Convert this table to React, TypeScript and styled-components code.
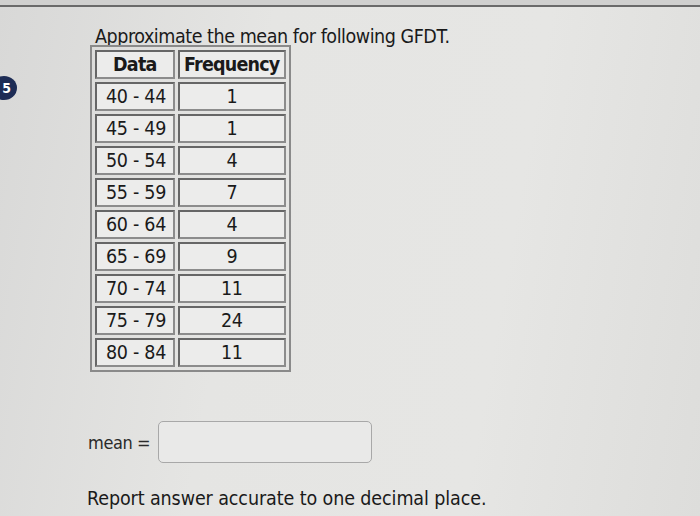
import styled, { createGlobalStyle } from "styled-components";

const Global = createGlobalStyle`
  html, body {
    margin: 0;
    padding: 0;
  }
  body {
    width: 700px;
    height: 516px;
    overflow: hidden;
    background: #e3e3e1;
    font-family: "DejaVu Sans Condensed", "DejaVu Sans", sans-serif;
    color: #1a1a1a;
  }
`;

const rows: [string, number][] = [
  ["40 - 44", 1],
  ["45 - 49", 1],
  ["50 - 54", 4],
  ["55 - 59", 7],
  ["60 - 64", 4],
  ["65 - 69", 9],
  ["70 - 74", 11],
  ["75 - 79", 24],
  ["80 - 84", 11],
];

const Q = {
  Page: styled.div`
    position: relative;
    width: 700px;
    height: 516px;
    background: linear-gradient(100deg, #d8d8d7 0%, #e5e5e3 35%, #e6e6e4 70%, #dddddb 100%);
  `,
  TopBar: styled.div`
    height: 5px;
    border-bottom: 2px solid #6a6a6a;
    background: #d0d0cf;
  `,
  Badge: styled.div`
    position: absolute;
    left: -9px;
    top: 76px;
    width: 26px;
    height: 24px;
    border-radius: 50%;
    background: #1d2c55;
    color: #fff;
    font-size: 14px;
    font-weight: 700;
    display: flex;
    align-items: center;
    justify-content: flex-end;
    padding-right: 6px;
    box-sizing: border-box;
  `,
  Body: styled.div`
    padding: 18px 0 0 95px;
    display: flex;
    flex-direction: column;
  `,
  Title: styled.div`
    font-size: 19.5px;
    line-height: 24px;
    letter-spacing: -0.45px;
  `,
  Table: styled.table`
    margin-top: -4px;
    margin-left: -5px;
    border: 2px solid #8a8a8a;
    border-spacing: 3px;
    border-collapse: separate;
    width: 201px;
  `,
  Cell: styled.td<{ $head?: boolean; $num?: boolean }>`
    border: 2px solid #666;
    border-right-color: #8c8c8c;
    border-bottom-color: #8c8c8c;
    background: #ececeb;
    height: 25px;
    padding: 0;
    font-size: 19.5px;
    font-weight: ${(p) => (p.$head ? 700 : 400)};
    letter-spacing: ${(p) => (p.$head ? "-0.8px" : "-0.3px")};
    text-align: ${(p) => (p.$num || p.$head ? "center" : "left")};
    padding-left: ${(p) => (p.$num || p.$head ? "0" : "9px")};
    line-height: 25px;
    white-space: nowrap;
  `,
  AnswerRow: styled.div`
    display: flex;
    align-items: center;
    margin-top: 49px;
    margin-left: -7px;
  `,
  Label: styled.span`
    font-size: 18px;
    width: 70px;
    letter-spacing: -0.4px;
    color: #2a2a2a;
  `,
  Input: styled.div`
    width: 212px;
    height: 40px;
    border: 1.5px solid #a8a8a8;
    border-radius: 5px;
    background: #e9e9e8;
  `,
  Note: styled.div`
    margin-top: 24px;
    margin-left: -8px;
    font-size: 19.5px;
    letter-spacing: -0.1px;
  `,
};

export default function App() {
  return (
    <>
      <Global />
      <Q.Page>
        <Q.TopBar />
        <Q.Badge>5</Q.Badge>
        <Q.Body>
          <Q.Title>Approximate the mean for following GFDT.</Q.Title>
          <Q.Table>
            <tbody>
              <tr>
                <Q.Cell $head>Data</Q.Cell>
                <Q.Cell $head>Frequency</Q.Cell>
              </tr>
              {rows.map(([range, freq]) => (
                <tr key={range}>
                  <Q.Cell>{range}</Q.Cell>
                  <Q.Cell $num>{freq}</Q.Cell>
                </tr>
              ))}
            </tbody>
          </Q.Table>
          <Q.AnswerRow>
            <Q.Label>mean =</Q.Label>
            <Q.Input />
          </Q.AnswerRow>
          <Q.Note>Report answer accurate to one decimal place.</Q.Note>
        </Q.Body>
      </Q.Page>
    </>
  );
}
